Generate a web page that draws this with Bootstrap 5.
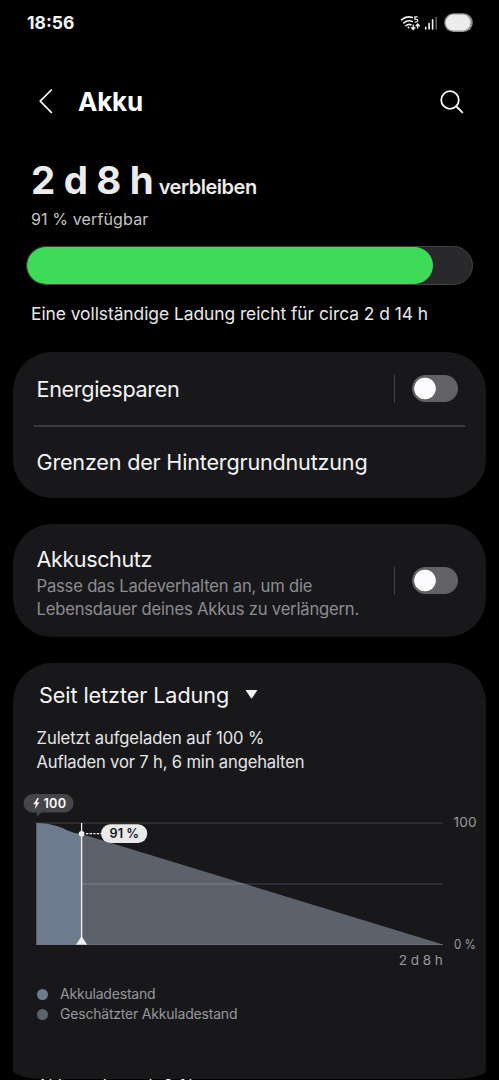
<!DOCTYPE html>
<html lang="de" data-bs-theme="dark">
<head>
<meta charset="utf-8">
<meta name="viewport" content="width=device-width, initial-scale=1">
<title>Akku</title>
<link href="https://cdn.jsdelivr.net/npm/bootstrap@5.3.0/dist/css/bootstrap.min.css" rel="stylesheet">
<style>
html,body{height:1080px;overflow:hidden}
body{background:#000;color:#f4f4f6;font-family:Inter,"Liberation Sans",sans-serif}
.statusbar{height:47px;padding:0 27px}
.statusbar svg{margin-right:-1px}
.clock{font-size:17.5px;font-weight:700;line-height:45px}
.titlebar{height:110px;padding:0 34px 0 37px}
.titlebar h1{font-size:26px;font-weight:700;letter-spacing:-.2px;line-height:32px;margin-left:24px}
.summary{padding:0 26px}
.remaining{height:44px;line-height:44px;padding:0 5px;color:#ececec;margin-top:1px}
.remaining b{font-size:38.5px;font-weight:700;letter-spacing:-1.1px;word-spacing:1.5px}
.remaining span{font-size:20px;font-weight:600;letter-spacing:-.48px;margin-left:6px}
.available{font-size:16px;line-height:24px;letter-spacing:.13px;color:#c4c4c6;padding:0 5px;margin-top:4.5px}
.battery{height:39px;border-radius:20px;margin-top:15.5px;width:447px;background:#29292b;border:1px solid #414143}
.battery .progress-bar{background:#3ddb58;border-radius:20px}
.fullcharge{font-size:17.4px;line-height:24px;letter-spacing:-.05px;padding:0 5px;margin-top:17px;color:#e8e8ea}
.panel{background:#18181a;border:0;border-radius:39px;margin:0 13px}
.panel-a{margin-top:26px;height:146px}
.panel-b{margin-top:26px;height:113px;padding:0 28px 0 23.5px}
.panel-c{margin-top:26px;height:416px;border-radius:39px 39px 30px 30px/39px 39px 9px 9px}
.setting{padding:0 28px 0 23.5px;height:73px}
.setting + .separator + .setting{height:70px}
.setting .label-lg{padding-top:1px}
.label-lg{font-size:21.6px;letter-spacing:-.33px;line-height:28px}
.tight{letter-spacing:-.42px}
.desc{font-size:16.6px;line-height:23px;color:#8d8d91;letter-spacing:-.19px;padding-top:2px}
.separator{height:1.5px;margin:0 21px;background:#3b3b3d}
.bar-v{width:1px;height:28px;background:#434346;margin-right:17px}
.form-check-input.toggle{width:46px;height:27px;margin:0;border:0;border-radius:14px;background:radial-gradient(circle at 13px 13.5px,#fcfcff 10.4px,transparent 11.2px),#626165}
.period{font-size:21.6px;letter-spacing:-.08px;line-height:28px;padding:18px 0 0 26px}
.charge-info{font-size:16.6px;line-height:24px;padding:17px 0 0 23.5px;color:#e6e6e8;letter-spacing:-.06px}
.charge-info div + div{letter-spacing:-.16px}
.chart{display:block;margin-top:16px}
.chart text{font-family:Inter,"Liberation Sans",sans-serif}
.legend{font-size:14px;line-height:20px;color:#97979a;padding:14px 0 0 23.5px;letter-spacing:-.2px}
.legend i{width:11px;height:11px;border-radius:50%;margin-right:12.5px}
.level{background:#6e7b8e}
.estimate{background:#5c626c}
.next-heading{font-size:16.6px;line-height:24px;padding-left:37px;margin-top:-5px;letter-spacing:.15px;white-space:nowrap}
</style>
<script src="https://cdn.jsdelivr.net/npm/bootstrap@5.3.0/dist/js/bootstrap.bundle.min.js"></script>
</head>
<body>
<header>
  <div class="statusbar d-flex justify-content-between align-items-start">
    <span class="clock">18:56</span>
    <svg width="74" height="46" viewBox="398 0 74 46" fill="none">
      <g stroke="#f2f2f2" stroke-width="1.6" stroke-linecap="round">
        <path d="M400.500 19.800Q405.500 15.500 411.400 17.600M402.800 22.900Q407 19.400 411.300 21.500M405 25.700Q407.800 23.600 409.800 24.800"/>
      </g>
      <circle cx="407.500" cy="27.500" r="1" fill="#f2f2f2"/>
      <path d="M416.700 16.800h-2.800v2.500c3.800-.5 3.900 3.400-.4 2.700" stroke="#f2f2f2" stroke-width="1.200"/>
      <path d="M412.200 24.500v4.500M410.200 27.300l2 2.200 2-2.200M416.700 28.600v-4.100M414.700 26.200l2-2.200 2 2.200" stroke="#f2f2f2" stroke-width="1.300"/>
      <path d="M424.700 27.400v1.500M428.100 23.600v5.300M431.600 19.800v9.100" stroke="#f4f4f4" stroke-width="1.600" stroke-linecap="round"/>
      <path d="M435.200 17v12.600" stroke="#666" stroke-width="1.500"/>
      <rect x="443.200" y="13.300" width="28.600" height="18.700" rx="9.300" fill="#919191"/>
      <rect x="444.600" y="14.600" width="24.900" height="16" rx="8" fill="#ececec"/>
    </svg>
  </div>
  <nav class="titlebar d-flex align-items-center">
    <svg width="17" height="28" viewBox="37 88 17 28" fill="none" stroke="#fafafa" stroke-width="1.700" stroke-linecap="round" stroke-linejoin="round"><path d="M51.300 90 40.200 101.200 51.300 112.300"/></svg>
    <h1 class="mb-0">Akku</h1>
    <svg class="ms-auto" width="28" height="28" viewBox="437 87 28 28" fill="none" stroke="#fafafa" stroke-width="1.800" stroke-linecap="round"><circle cx="450" cy="99" r="8.800"/><path d="m456.400 105.500 6 5.900"/></svg>
  </nav>
</header>

<section class="summary">
  <div class="remaining"><b>2 d 8 h</b><span>verbleiben</span></div>
  <div class="available">91 % verfügbar</div>
  <div class="progress battery"><div class="progress-bar" style="width:91.2%"></div></div>
  <div class="fullcharge">Eine vollständige Ladung reicht für circa 2 d 14 h</div>
</section>

<main>
  <div class="card panel panel-a">
    <div class="setting d-flex align-items-center">
      <span class="label-lg me-auto">Energiesparen</span>
      <div class="bar-v"></div><input class="form-check-input toggle" type="checkbox" role="switch" aria-label="Energiesparen">
    </div>
    <div class="separator"></div>
    <div class="setting d-flex align-items-center"><span class="label-lg" style="letter-spacing:-.2px">Grenzen der Hintergrundnutzung</span></div>
  </div>

  <div class="card panel panel-b flex-row align-items-center">
    <div class="me-auto pt-1">
      <div class="label-lg tight">Akkuschutz</div>
      <div class="desc">Passe das Ladeverhalten an, um die<br>Lebensdauer deines Akkus zu verlängern.</div>
    </div>
    <div class="bar-v"></div><input class="form-check-input toggle" type="checkbox" role="switch" aria-label="Akkuschutz">
  </div>

  <div class="card panel panel-c">
    <div class="period d-flex align-items-center">Seit letzter Ladung
      <svg class="ms-3" width="13" height="10" viewBox="0 0 13 10"><path d="M1.300 0h10.400q.8 0 .3.700L7.200 7.900q-.7.900-1.400 0L1 .7Q.5 0 1.300 0Z" fill="#f2f2f2"/></svg>
    </div>
    <div class="charge-info">
      <div>Zuletzt aufgeladen auf 100 %</div>
      <div>Aufladen vor 7 h, 6 min angehalten</div>
    </div>
    <svg class="chart" width="473" height="180" viewBox="13 790 473 180">
      <path d="M36 823H443" stroke="#343436" stroke-width="1.700"/>
      <path d="M81.500 834 443 944.500H81.500Z" fill="#5c626c"/>
      <path d="M36.300 823C49 823 60 826.500 67 830.200Q73 833 81.500 834V944.700H36.300Z" fill="#6e7b8e"/>
      <path d="M82 884H443" stroke="#fff" stroke-opacity=".13" stroke-width="1.700"/>
      <path d="M36.300 944.500H443" stroke="#737d8c" stroke-width=".8"/>
      <path d="M81.600 823V944" stroke="#f2f2f4" stroke-width="1.300"/>
      <path d="M76 944.700 80.800 937.600Q81.600 936.600 82.400 937.600L87.200 944.700Z" fill="#ededef"/>
      <circle cx="81.600" cy="833.700" r="2.800" fill="#f2f2f4"/>
      <path d="M86 833.700H101" stroke="#f2f2f4" stroke-width="1.200" stroke-dasharray="2.400 1.200"/>
      <rect x="101" y="824.300" width="46.300" height="18.600" rx="9.300" fill="#e9e9eb"/>
      <text x="109.500" y="838.200" font-size="12.700" font-weight="600" fill="#161618" textLength="29.500">91 %</text>
      <path d="M32.800 794H64.300a9.300 9.300 0 0 1 0 18.600H41.500L36.800 816.700V812.600H32.800a9.300 9.300 0 0 1 0-18.600Z" fill="#464648"/>
      <path d="M37.500 797.900 33.300 804.300H36L34.700 809.300 39.500 802.300H36.900L38.900 797.900Z" fill="#fff"/>
      <text x="43.500" y="808.100" font-size="12.700" font-weight="600" fill="#fafafa" textLength="22.500">100</text>
      <g font-size="13.600" fill="#98989b">
        <text x="453.500" y="827.200" textLength="23">100</text>
        <text x="454" y="949" textLength="22" lengthAdjust="spacingAndGlyphs">0 %</text>
        <text x="398.800" y="965" textLength="44">2 d 8 h</text>
      </g>
    </svg>
    <div class="legend">
      <div class="d-flex align-items-center"><i class="level"></i><span>Akkuladestand</span></div>
      <div class="d-flex align-items-center"><i class="estimate"></i><span>Geschätzter Akkuladestand</span></div>
    </div>
  </div>
  <div class="next-heading">Akkuverbrauch 9 %</div>
</main>
</body>
</html>
